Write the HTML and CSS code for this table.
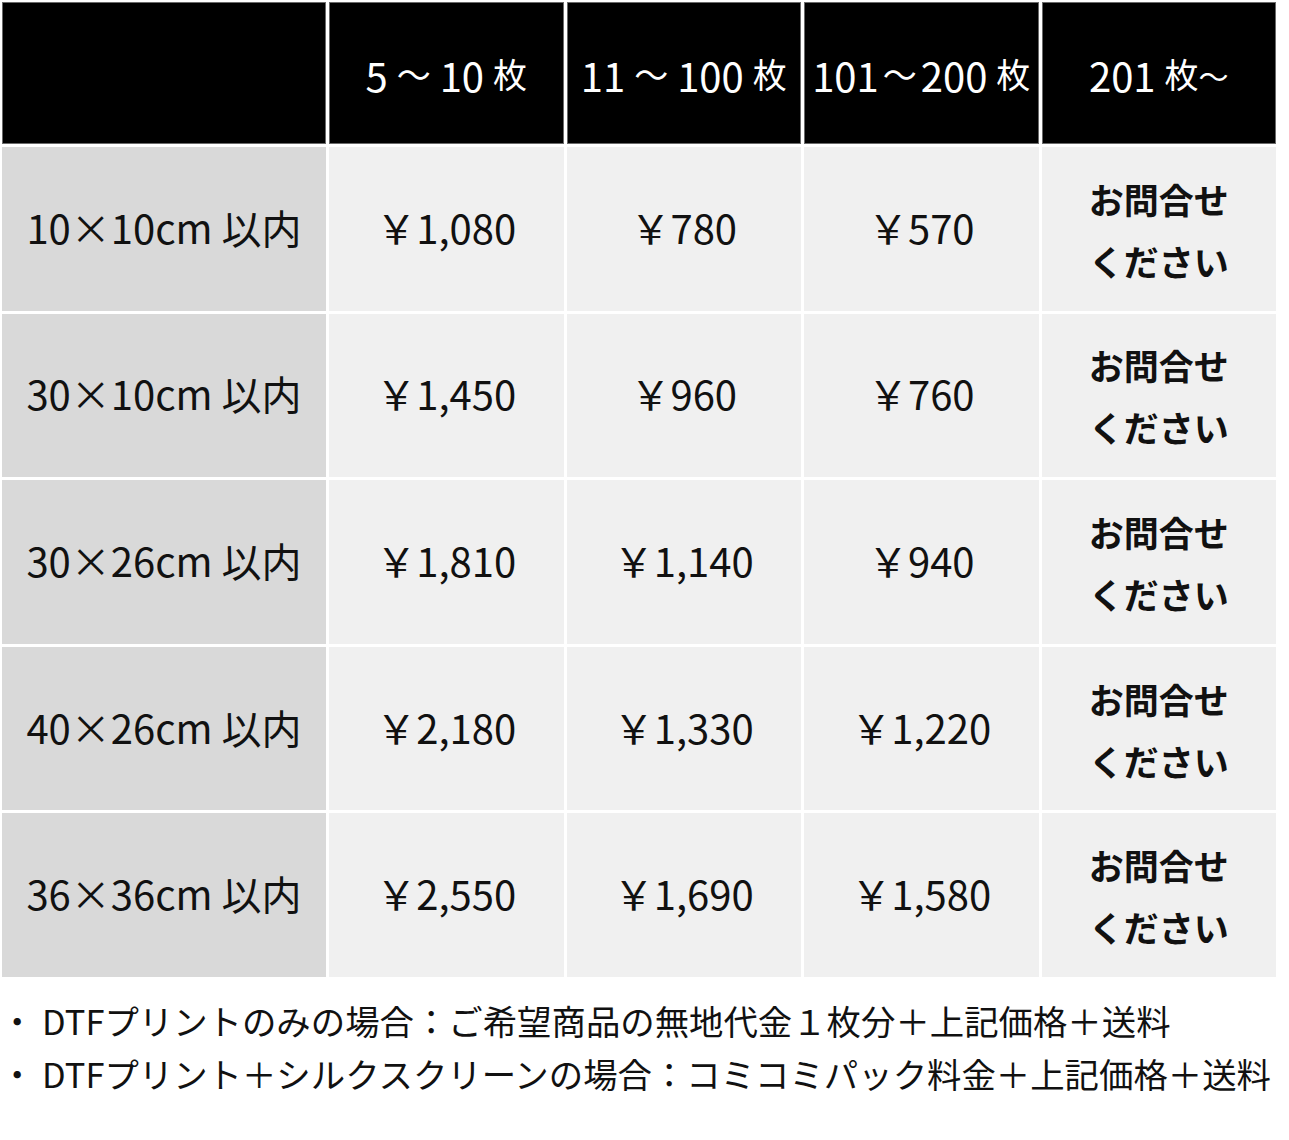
FILE: index.html
```html
<!DOCTYPE html>
<html lang="ja">
<head>
<meta charset="utf-8">
<title>DTFプリント料金表</title>
<link rel="stylesheet" href="styles.css">
</head>
<body>
<div class="price-table">
  <div class="cell head"></div>
  <div class="cell head">5 <span class="unit">〜</span> 10 <span class="unit">枚</span></div>
  <div class="cell head">11 <span class="unit">〜</span> 100 <span class="unit">枚</span></div>
  <div class="cell head">101<span class="unit tight">〜</span>200 <span class="unit">枚</span></div>
  <div class="cell head">201 <span class="unit">枚<span class="tilde">〜</span></span></div>

  <div class="cell label">10×10cm 以内</div>
  <div class="cell price">￥1,080</div>
  <div class="cell price">￥780</div>
  <div class="cell price">￥570</div>
  <div class="cell ask">お問合せ<br>ください</div>

  <div class="cell label">30×10cm 以内</div>
  <div class="cell price">￥1,450</div>
  <div class="cell price">￥960</div>
  <div class="cell price">￥760</div>
  <div class="cell ask">お問合せ<br>ください</div>

  <div class="cell label">30×26cm 以内</div>
  <div class="cell price">￥1,810</div>
  <div class="cell price">￥1,140</div>
  <div class="cell price">￥940</div>
  <div class="cell ask">お問合せ<br>ください</div>

  <div class="cell label">40×26cm 以内</div>
  <div class="cell price">￥2,180</div>
  <div class="cell price">￥1,330</div>
  <div class="cell price">￥1,220</div>
  <div class="cell ask">お問合せ<br>ください</div>

  <div class="cell label">36×36cm 以内</div>
  <div class="cell price">￥2,550</div>
  <div class="cell price">￥1,690</div>
  <div class="cell price">￥1,580</div>
  <div class="cell ask">お問合せ<br>ください</div>
</div>
<ul class="notes">
  <li>・ DTFプリントのみの場合：ご希望商品の無地代金１枚分＋上記価格＋送料</li>
  <li>・ DTFプリント＋シルクスクリーンの場合：コミコミパック料金＋上記価格＋送料</li>
</ul>
</body>
</html>
```

FILE: styles.css
```css
html, body {
  margin: 0;
  padding: 0;
  background: #ffffff;
}

body {
  font-family: "Noto Sans CJK JP", "Noto Sans", sans-serif;
  color: #111111;
}

.price-table {
  display: grid;
  grid-template-columns: 324px repeat(4, 234.5px);
  grid-template-rows: 142px repeat(5, 163.6px);
  column-gap: 3px;
  row-gap: 3px;
  padding: 2px 0 0 2px;
}

.cell {
  box-sizing: border-box;
  display: flex;
  align-items: center;
  justify-content: center;
  text-align: center;
  font-size: 40px;
  line-height: 1.2;
  white-space: pre;
}

.head {
  background: #000000;
  color: #ffffff;
  border: 1px solid #6a6a6a;
  padding-top: 3px;
}

.head .unit {
  font-size: 34px;
}

.head .tight {
  margin: 0 4px;
}

.head .tilde {
  font-size: 30px;
}

.label {
  background: #d9d9d9;
  padding-bottom: 4px;
}

.price {
  background: #f0f0f0;
  padding-bottom: 4px;
}

.ask {
  background: #f0f0f0;
  font-size: 35px;
  font-weight: 700;
  line-height: 62px;
  padding-top: 2px;
  white-space: normal;
}

.notes {
  list-style: none;
  margin: 17px 0 0 0;
  padding: 0;
  font-size: 34.4px;
  line-height: 53px;
}
```
